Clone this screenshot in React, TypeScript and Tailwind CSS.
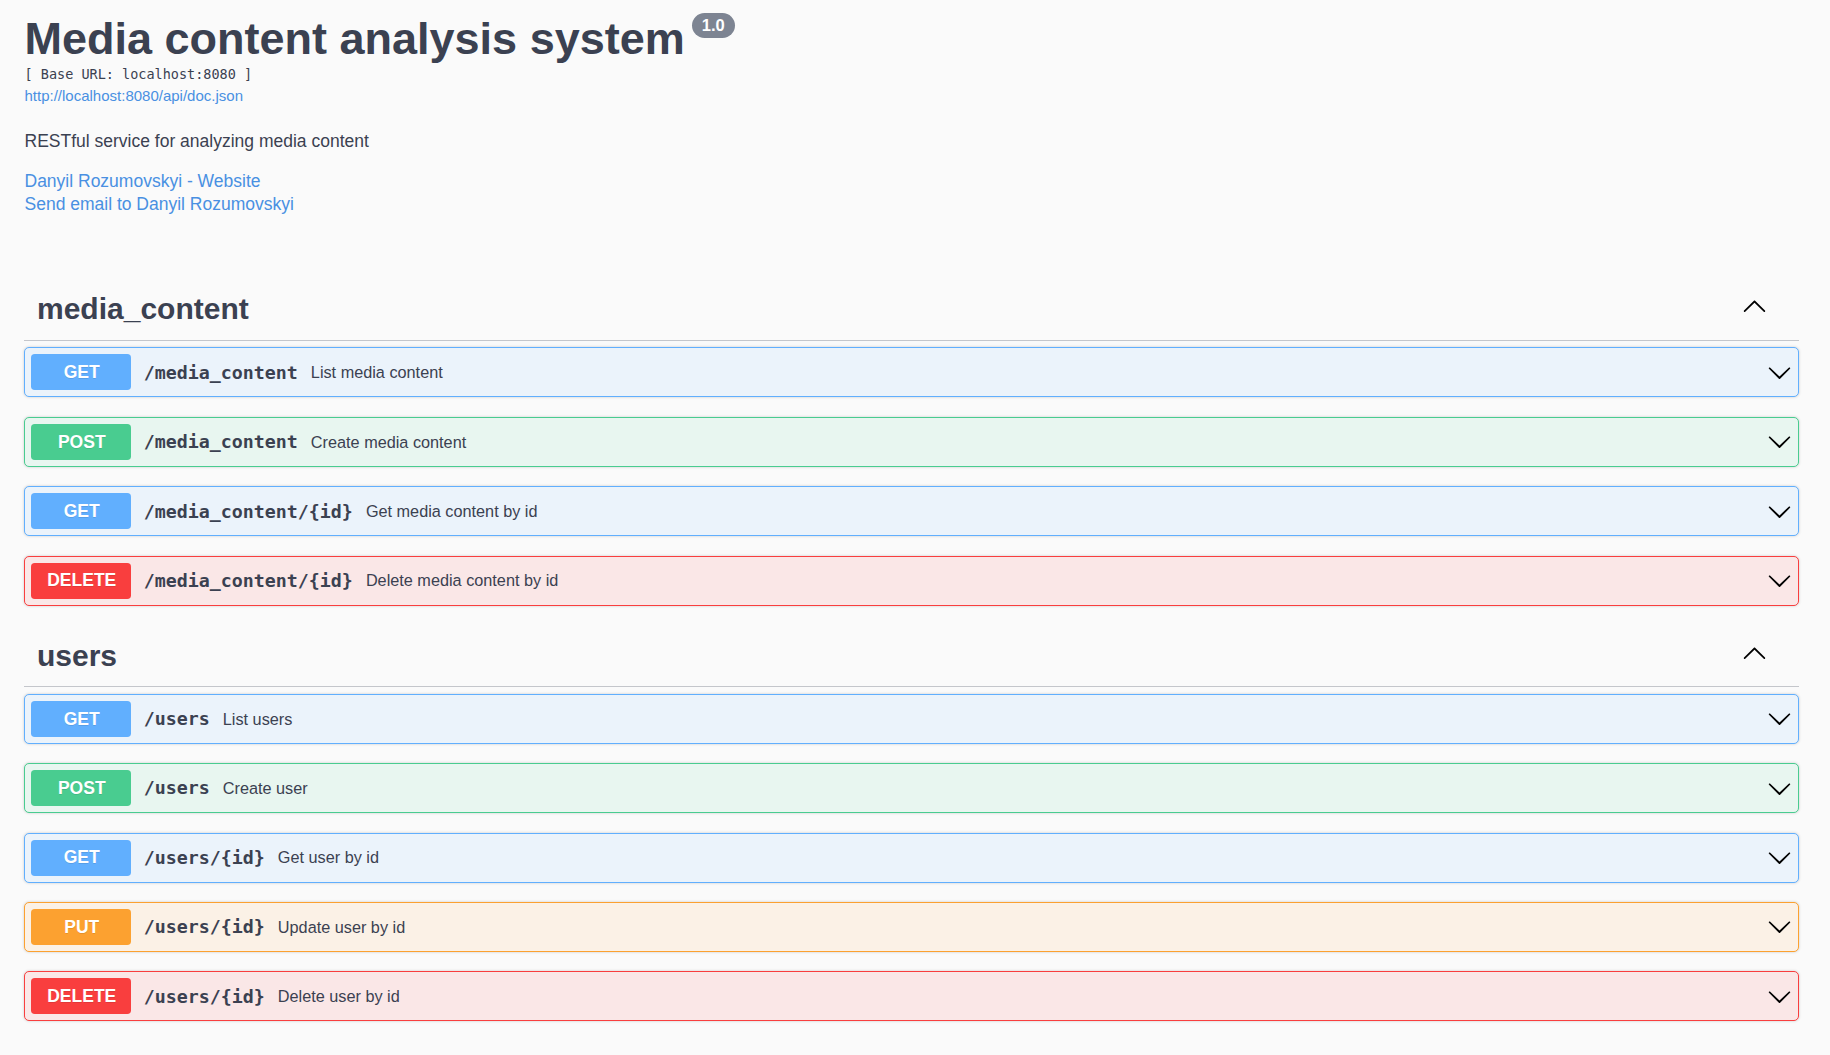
type Method = "GET" | "POST" | "PUT" | "DELETE";

type Op = { method: Method; path: string; summary: string };

const SECTIONS: { tag: string; ops: Op[] }[] = [
  {
    tag: "media_content",
    ops: [
      { method: "GET", path: "/media_content", summary: "List media content" },
      { method: "POST", path: "/media_content", summary: "Create media content" },
      { method: "GET", path: "/media_content/{id}", summary: "Get media content by id" },
      { method: "DELETE", path: "/media_content/{id}", summary: "Delete media content by id" },
    ],
  },
  {
    tag: "users",
    ops: [
      { method: "GET", path: "/users", summary: "List users" },
      { method: "POST", path: "/users", summary: "Create user" },
      { method: "GET", path: "/users/{id}", summary: "Get user by id" },
      { method: "PUT", path: "/users/{id}", summary: "Update user by id" },
      { method: "DELETE", path: "/users/{id}", summary: "Delete user by id" },
    ],
  },
];

const STYLES: Record<Method, { row: string; badge: string }> = {
  GET: { row: "border-[#61affe] bg-[#ebf3fb]", badge: "bg-[#61affe]" },
  POST: { row: "border-[#49cc90] bg-[#e8f6f0]", badge: "bg-[#49cc90]" },
  PUT: { row: "border-[#fca130] bg-[#fbf1e6]", badge: "bg-[#fca130]" },
  DELETE: { row: "border-[#f93e3e] bg-[#fae7e7]", badge: "bg-[#f93e3e]" },
};

const sans = "font-['Liberation_Sans',Arial,sans-serif]";
const mono = "font-['DejaVu_Sans_Mono',monospace]";

function ArrowDown() {
  return (
    <svg width="25" height="25" viewBox="0 0 20 20" className="shrink-0">
      <path d="M17.418 6.109c.272-.268.709-.268.979 0s.271.701 0 .969l-7.908 7.83c-.27.268-.707.268-.979 0l-7.908-7.83c-.27-.268-.27-.701 0-.969.271-.268.709-.268.979 0L10 13.25l7.418-7.141z" />
    </svg>
  );
}

function ArrowUp() {
  return (
    <svg width="25" height="25" viewBox="0 0 20 20" className="mt-[1px] shrink-0">
      <path d="M17.418 14.908c.272.268.709.268.979 0s.271-.701 0-.969l-7.908-7.83c-.27-.268-.707-.268-.979 0l-7.908 7.83c-.27.268-.27.701 0 .969.271.268.709.268.979 0L10 7.767l7.418 7.141z" />
    </svg>
  );
}

function OpRow({ op }: { op: Op }) {
  const s = STYLES[op.method];
  return (
    <div
      className={`flex h-[50px] items-center rounded-[5px] border pl-[6.25px] pr-[6.25px] shadow-[0_0_3px_rgba(0,0,0,0.19)] ${s.row}`}
    >
      <span
        className={`flex h-[36px] w-[100px] shrink-0 items-center justify-center rounded-[3.75px] pl-[1px] text-[17.5px] font-bold text-white [text-shadow:0_1px_0_rgba(0,0,0,0.1)] ${sans} ${s.badge}`}
      >
        {op.method}
      </span>
      <span className={`pl-[12.5px] pr-[13px] text-[18.3px] font-bold text-[#3b4151] ${mono}`}>{op.path}</span>
      <span className={`flex-1 text-[16.25px] text-[#3b4151] ${sans}`}>{op.summary}</span>
      <ArrowDown />
    </div>
  );
}

export default function App() {
  return (
    <div className={`min-h-screen bg-[#fafafa] pb-[40px] text-[#3b4151] ${sans}`}>
      <div className="pl-[24.5px] pt-[13px]">
        <div className="flex items-start">
          <h2 className="text-[45px] font-bold leading-[52px]">Media content analysis system</h2>
          <span className="ml-[7px] flex h-[25px] items-center rounded-full bg-[#7d8492] px-[10px] text-[16.5px] font-bold text-white">
            1.0
          </span>
        </div>
        <pre className={`mt-[1.3px] text-[13.5px] leading-[16px] ${mono}`}>[ Base URL: localhost:8080 ]</pre>
        <a href="#" className="mt-[4.5px] block text-[15px] leading-[18px] text-[#4990e2]">
          http://localhost:8080/api/doc.json
        </a>
        <p className="mt-[25px] text-[17.5px] leading-[22.75px]">RESTful service for analyzing media content</p>
        <div className="mt-[17.3px] text-[17.5px] leading-[22.75px] text-[#4990e2]">
          <a href="#" className="block">Danyil Rozumovskyi - Website</a>
          <a href="#" className="block">Send email to Danyil Rozumovskyi</a>
        </div>
      </div>

      <div className="pl-[24px] pr-[31px]">
        {SECTIONS.map((sec, i) => (
          <div key={sec.tag} className={i === 0 ? "mt-[64.6px]" : "mt-[20.7px]"}>
            <div className="flex items-start justify-between border-b border-[#c4c6cb] pb-[13.5px] pl-[13px] pr-[32px] pt-[12.5px]">
              <h3 className="text-[30px] font-bold leading-[34px]">{sec.tag}</h3>
              <ArrowUp />
            </div>
            <div className="mt-[6.5px] flex flex-col gap-[19.4px]">
              {sec.ops.map((op, j) => (
                <OpRow key={j} op={op} />
              ))}
            </div>
          </div>
        ))}
      </div>
    </div>
  );
}
